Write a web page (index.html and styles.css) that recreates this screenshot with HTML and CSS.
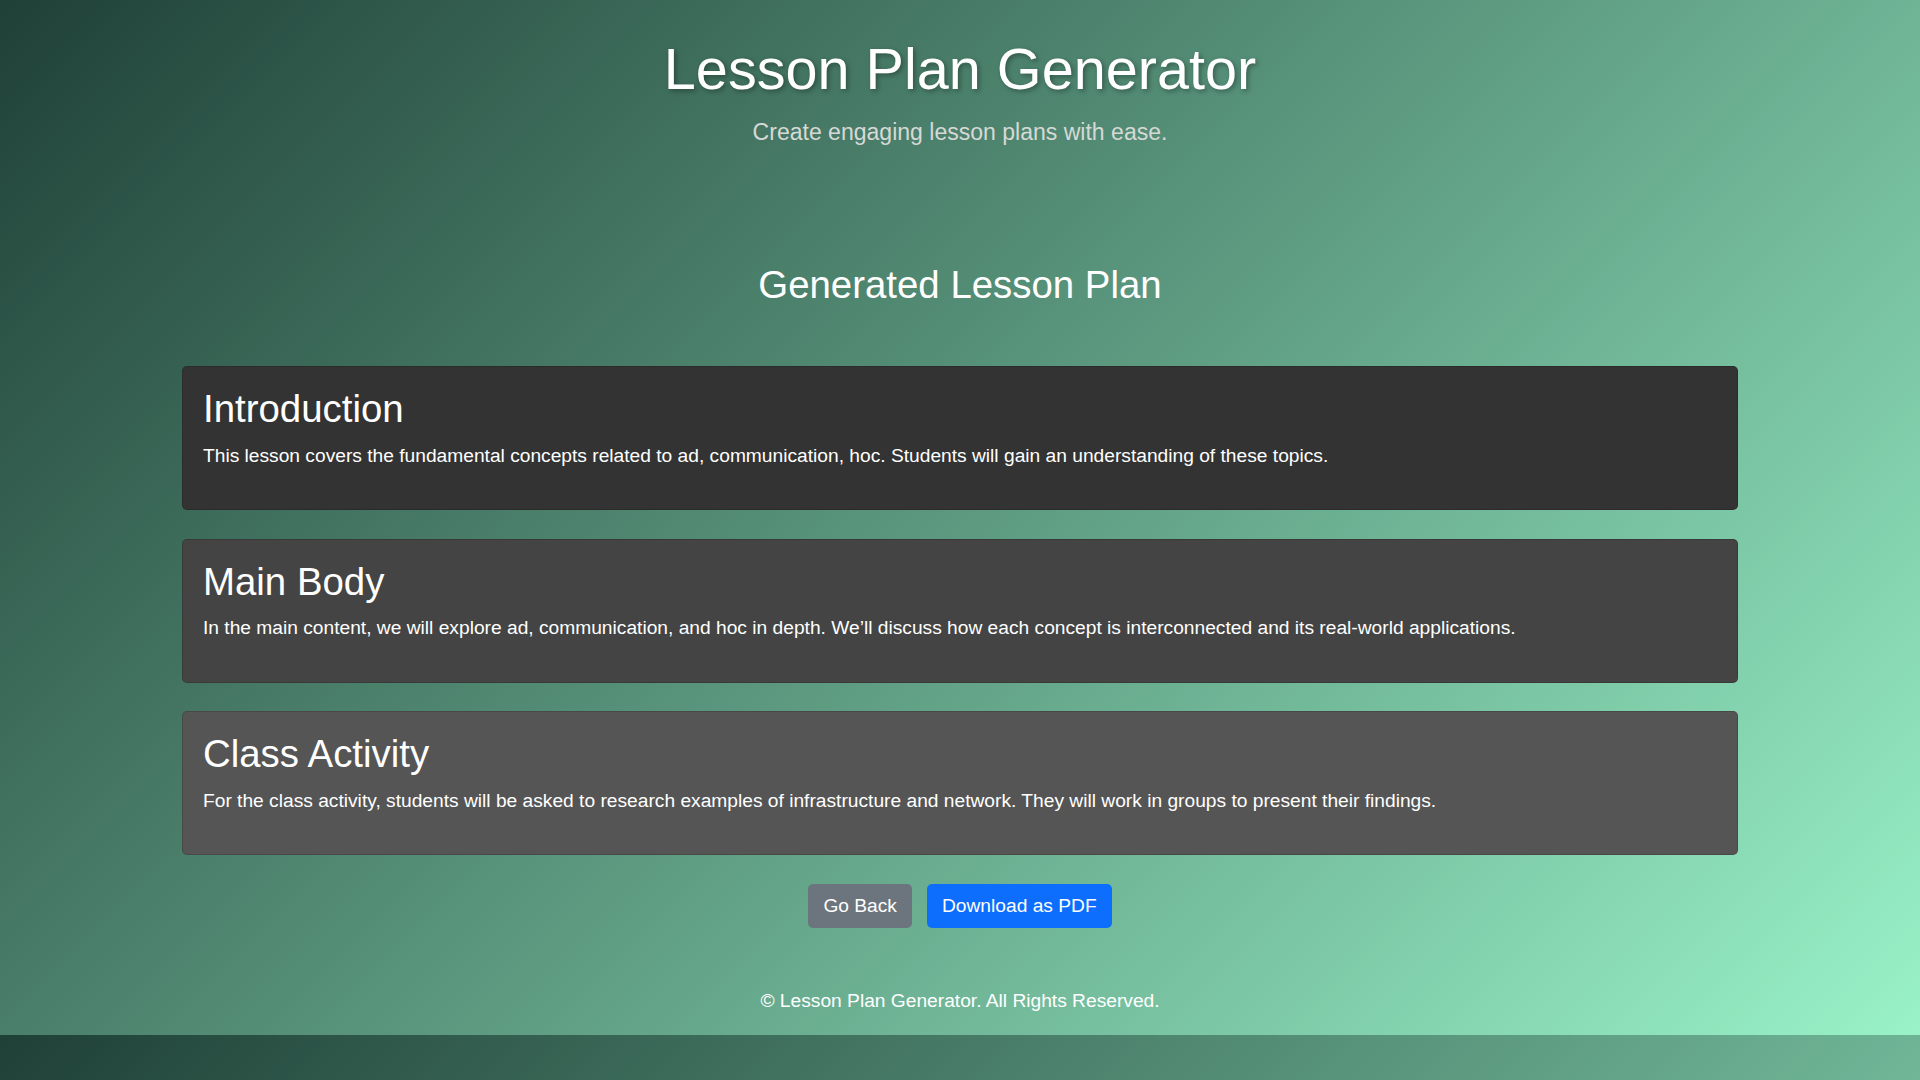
FILE: index.html
```html
<!DOCTYPE html>
<html lang="en">
<head>
<meta charset="utf-8">
<title>Lesson Plan Generator</title>
<link rel="stylesheet" href="styles.css">
</head>
<body>
<header class="site-header">
  <h1 class="site-title">Lesson Plan Generator</h1>
  <p class="site-subtitle">Create engaging lesson plans with ease.</p>
</header>
<main class="container">
  <h2 class="page-title">Generated Lesson Plan</h2>
  <section class="plan-card card-intro">
    <h2 class="card-title">Introduction</h2>
    <p class="card-text">This lesson covers the fundamental concepts related to ad, communication, hoc. Students will gain an understanding of these topics.</p>
  </section>
  <section class="plan-card card-body">
    <h2 class="card-title">Main Body</h2>
    <p class="card-text">In the main content, we will explore ad, communication, and hoc in depth. We’ll discuss how each concept is interconnected and its real-world applications.</p>
  </section>
  <section class="plan-card card-activity">
    <h2 class="card-title">Class Activity</h2>
    <p class="card-text">For the class activity, students will be asked to research examples of infrastructure and network. They will work in groups to present their findings.</p>
  </section>
  <div class="actions">
    <button class="btn btn-secondary">Go Back</button>
    <button class="btn btn-primary">Download as PDF</button>
  </div>
</main>
<footer class="site-footer">
  <p class="footer-text">© Lesson Plan Generator. All Rights Reserved.</p>
</footer>
</body>
</html>
```
FILE: styles.css
```css
html {
  margin: 0;
  padding: 0;
}
body {
  margin: 0;
  padding: 0;
  font-family: "Liberation Sans", Arial, sans-serif;
  font-size: 19.2px;
  color: #ffffff;
  background: linear-gradient(135deg, #1f4037, #99f2c8);
}
.site-header {
  text-align: center;
  padding-top: 36px;
}
.site-title {
  margin: 0;
  font-size: 57.6px;
  font-weight: normal;
  line-height: normal;
  text-shadow: 2px 2px 5px rgba(0, 0, 0, 0.35);
}
.site-subtitle {
  margin: 17px 0 0;
  font-size: 23.04px;
  line-height: normal;
  color: #d6d9d6;
}
.container {
  width: 1556px;
  margin: 0 auto;
}
.page-title {
  margin: 117px 0 59px;
  text-align: center;
  font-size: 38.4px;
  font-weight: normal;
  line-height: normal;
}
.plan-card {
  border: 1px solid rgba(0, 0, 0, 0.15);
  border-radius: 5px;
  padding: 20px;
  margin-bottom: 28.5px;
}
.card-intro { background: #333333; }
.card-body { background: #444444; }
.card-activity { background: #555555; }
.card-title {
  margin: 0 0 13.5px;
  font-size: 38.4px;
  font-weight: normal;
  line-height: normal;
}
.card-text {
  margin: 0 0 22.5px;
  line-height: normal;
}
.actions {
  display: flex;
  justify-content: center;
  gap: 15px;
  margin-top: 0;
}
.btn {
  font-family: "Liberation Sans", Arial, sans-serif;
  font-size: 19.2px;
  line-height: 1.5;
  padding: 8px 15px;
  border: none;
  border-radius: 5px;
  color: #ffffff;
  cursor: pointer;
}
.btn-secondary { background: #6c757d; }
.btn-primary { background: #0d6efd; }
.site-footer {
  text-align: center;
  padding: 61.3px 0 23px;
}
.footer-text {
  margin: 0;
  line-height: normal;
}
```
